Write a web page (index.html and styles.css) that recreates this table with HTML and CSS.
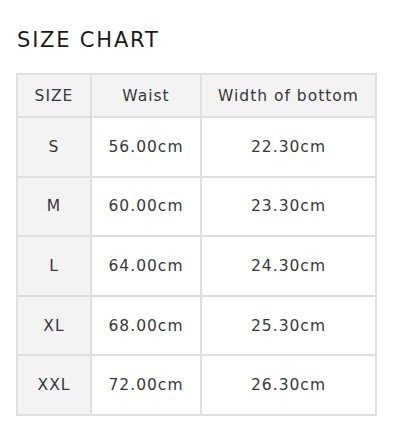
FILE: index.html
```html
<!DOCTYPE html>
<html lang="en">
<head>
<meta charset="utf-8">
<title>Size chart</title>
<link rel="stylesheet" href="styles.css">
</head>
<body>
<section class="chart">
  <h2 class="chart-title">SIZE CHART</h2>
  <table class="size-table">
    <colgroup>
      <col class="col-size">
      <col class="col-waist">
      <col class="col-bottom">
    </colgroup>
    <thead>
      <tr class="head-row">
        <th class="cell cell-label">SIZE</th>
        <th class="cell cell-head">Waist</th>
        <th class="cell cell-head">Width of bottom</th>
      </tr>
    </thead>
    <tbody>
      <tr class="body-row"><td class="cell cell-label">S</td><td class="cell">56.00cm</td><td class="cell">22.30cm</td></tr>
      <tr class="body-row"><td class="cell cell-label">M</td><td class="cell">60.00cm</td><td class="cell">23.30cm</td></tr>
      <tr class="body-row"><td class="cell cell-label">L</td><td class="cell">64.00cm</td><td class="cell">24.30cm</td></tr>
      <tr class="body-row"><td class="cell cell-label">XL</td><td class="cell">68.00cm</td><td class="cell">25.30cm</td></tr>
      <tr class="body-row"><td class="cell cell-label">XXL</td><td class="cell">72.00cm</td><td class="cell">26.30cm</td></tr>
    </tbody>
  </table>
</section>
</body>
</html>
```
FILE: styles.css
```css
html, body {
  margin: 0;
  padding: 0;
  background: #ffffff;
}

.chart {
  padding: 28px 0 0 16px;
  font-family: "DejaVu Sans", "Liberation Sans", sans-serif;
}

.chart-title {
  margin: 0 0 21px 1px;
  font-size: 21px;
  line-height: 24px;
  font-weight: normal;
  letter-spacing: 1.8px;
  color: #1a1a1a;
}

.size-table {
  width: 361px;
  table-layout: fixed;
  border-collapse: separate;
  border-spacing: 2px;
  background: #dedede;
}

.col-size { width: 72px; }
.col-waist { width: 108px; }
.col-bottom { width: 173px; }

.head-row { height: 41px; }
.body-row { height: 57.6px; }

.cell {
  padding: 0;
  background: #ffffff;
  text-align: center;
  vertical-align: middle;
  font-size: 15.5px;
  font-weight: normal;
  letter-spacing: 1px;
  color: #383838;
}

.cell-head,
.cell-label {
  background: #f3f3f3;
}
```
